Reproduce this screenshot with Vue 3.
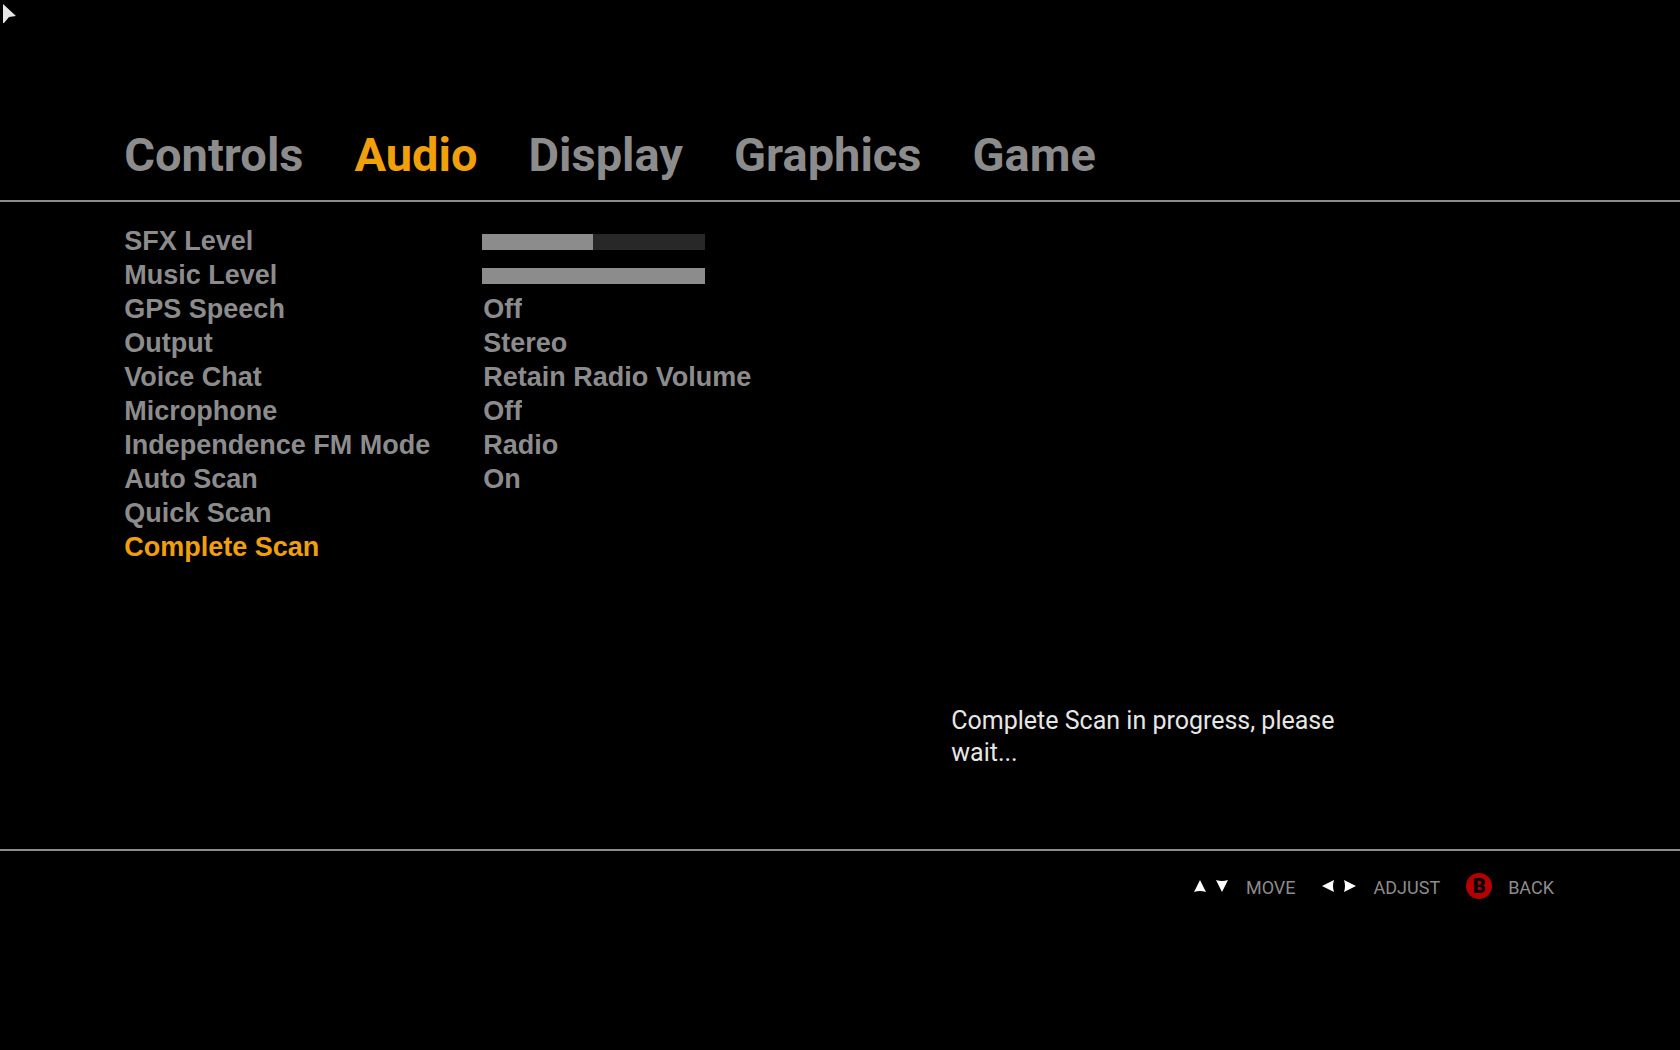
<script setup>
import { ref } from 'vue'

const tabs = ['Controls', 'Audio', 'Display', 'Graphics', 'Game']
const activeTab = ref('Audio')
const activeRow = ref('complete')

const rows = ref([
  { id: 'sfx', label: 'SFX Level', type: 'level', value: 50 },
  { id: 'music', label: 'Music Level', type: 'level', value: 100 },
  { id: 'gps', label: 'GPS Speech', type: 'choice', value: 'Off', options: ['Off', 'On'] },
  { id: 'output', label: 'Output', type: 'choice', value: 'Stereo', options: ['Stereo'] },
  { id: 'voice', label: 'Voice Chat', type: 'choice', value: 'Retain Radio Volume', options: ['Retain Radio Volume'] },
  { id: 'mic', label: 'Microphone', type: 'choice', value: 'Off', options: ['Off', 'On'] },
  { id: 'fm', label: 'Independence FM Mode', type: 'choice', value: 'Radio', options: ['Radio'] },
  { id: 'auto', label: 'Auto Scan', type: 'choice', value: 'On', options: ['On', 'Off'] },
  { id: 'quick', label: 'Quick Scan', type: 'action' },
  { id: 'complete', label: 'Complete Scan', type: 'action' },
])
</script>

<template>
  <div class="screen">
    <svg class="pointer" viewBox="0 0 13 19" aria-hidden="true">
      <path d="M0 0 L13 12 L6 13 L1 19 L0 19 Z" />
    </svg>

    <header class="header">
      <nav class="tabs" aria-label="Settings">
        <button
          v-for="tab in tabs"
          :key="tab"
          type="button"
          class="tab"
          :class="{ active: tab === activeTab }"
          @click="activeTab = tab"
        >{{ tab }}</button>
      </nav>
    </header>

    <main class="main">
      <div class="settings">
        <div
          v-for="row in rows"
          :key="row.id"
          class="row"
          :class="{ active: row.id === activeRow }"
          @mouseenter="activeRow = row.id"
        >
          <button v-if="row.type === 'action'" type="button" class="action">{{ row.label }}</button>
          <template v-else>
            <label class="label" :for="row.id">{{ row.label }}</label>
            <input
              v-if="row.type === 'level'"
              :id="row.id"
              v-model.number="row.value"
              class="level"
              type="range"
              min="0"
              max="100"
              :style="{ '--level': row.value + '%' }"
            />
            <select v-else :id="row.id" v-model="row.value" class="choice">
              <option v-for="option in row.options" :key="option">{{ option }}</option>
            </select>
          </template>
        </div>
      </div>
      <p class="message" role="status">Complete Scan in progress, please wait...</p>
    </main>

    <footer class="footer">
      <div class="hint">
        <svg class="arrows" viewBox="0 0 34 13" aria-hidden="true">
          <path d="M6 0 L12 12 Q6 10 0 12 Z M22 0 Q28 2 34 0 L28 12 Z" />
        </svg>
        <span>MOVE</span>
      </div>
      <div class="hint">
        <svg class="arrows" viewBox="0 0 34 13" aria-hidden="true">
          <path d="M0 6 L12 0 Q10 6 12 12 Z M22 0 L34 6 L22 12 Q24 6 22 0 Z" />
        </svg>
        <span>ADJUST</span>
      </div>
      <button type="button" class="hint back">
        <span class="badge">B</span>
        <span>BACK</span>
      </button>
    </footer>
  </div>
</template>

<style>
body {
  margin: 0;
  background: #000;
}
</style>

<style scoped>
.screen {
  --grey: #8c8c8c;
  --amber: #f0a00a;
  display: flex;
  flex-direction: column;
  box-sizing: border-box;
  min-height: 100vh;
  background: #000;
  color: var(--grey);
  font-family: "Liberation Sans", Arial, sans-serif;
}

button,
select,
input {
  margin: 0;
  padding: 0;
  border: 0;
  border-radius: 0;
  background: none;
  color: inherit;
  font: inherit;
  appearance: none;
}

.pointer {
  position: absolute;
  top: 4px;
  left: 3px;
  width: 13px;
  height: 19px;
  fill: #e6e6e6;
}

.header {
  padding: 127px 7.4% 17px;
  border-bottom: 2px solid var(--grey);
}

.tabs {
  display: flex;
  gap: 51px;
  font-family: Roboto, "Liberation Sans", sans-serif;
  font-size: 47px;
  font-weight: 700;
  line-height: 56px;
}

.tab.active,
.row.active {
  color: var(--amber);
}

.main {
  display: flex;
  flex: 1;
  flex-direction: column;
  padding: 22px 7.4% 80px;
}

.settings {
  display: flex;
  flex-direction: column;
  font-size: 27px;
  font-weight: 700;
}

.row {
  display: flex;
  align-items: center;
  height: 34px;
  line-height: 34px;
}

.label {
  flex: none;
  width: 358px;
}

.choice {
  padding-left: 1px;
}

.level {
  width: 223px;
  height: 16px;
  margin-top: 2px;
  background: linear-gradient(to right, var(--grey) var(--level), #282828 var(--level));
}

.level::-webkit-slider-thumb {
  width: 0;
  height: 16px;
  appearance: none;
}

.message {
  align-self: flex-end;
  width: 404px;
  margin: auto 14% 0 0;
  color: #e6e6e6;
  font-family: Roboto, "Liberation Sans", sans-serif;
  font-size: 25px;
  line-height: 32px;
}

.footer {
  display: flex;
  justify-content: flex-end;
  gap: 26px;
  padding: 21px 7.5% 146px;
  border-top: 2px solid var(--grey);
  font-family: Roboto, "Liberation Sans", sans-serif;
  font-size: 18px;
  line-height: 32px;
}

.hint {
  display: flex;
  align-items: center;
  gap: 18px;
}

.back {
  gap: 16px;
}

.arrows,
.badge {
  margin-bottom: 4px;
}

.arrows {
  width: 34px;
  height: 13px;
  fill: #fff;
}

.badge {
  width: 26px;
  height: 26px;
  border-radius: 50%;
  background: #b40000;
  color: #000;
  font-size: 20px;
  font-weight: 900;
  line-height: 26px;
  text-align: center;
}
</style>
